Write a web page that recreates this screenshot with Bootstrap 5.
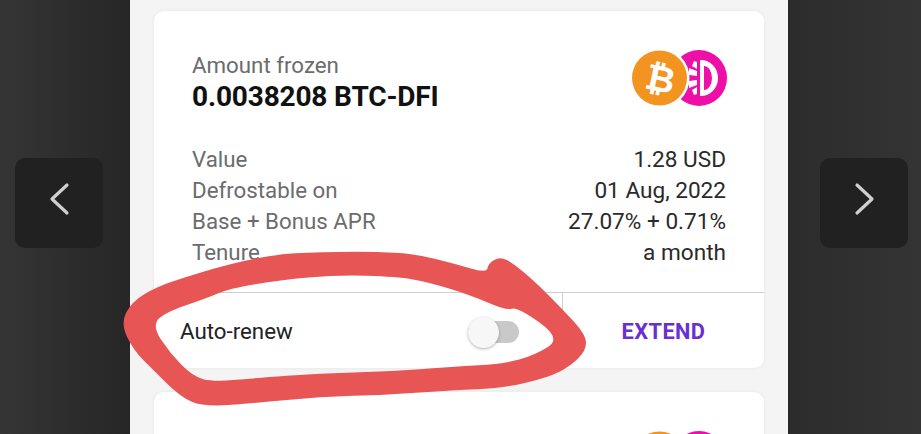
<!DOCTYPE html>
<html lang="en">
<head>
<meta charset="utf-8">
<title>Amount frozen</title>
<link href="https://cdn.jsdelivr.net/npm/bootstrap@5.3.0/dist/css/bootstrap.min.css" rel="stylesheet">
<style>
html,body{height:434px;overflow:hidden;}
body{font-family:Roboto,"Liberation Sans",sans-serif;background:linear-gradient(90deg,#353535 0,#262626 130px,#262626 788px,#2c2c2c 790px,#343434 100%);color:#1d1d1d;}
.stage{width:921px;height:434px;position:relative;}
.gutter{width:130px;padding-left:15px;}
.gutter-r{width:133px;padding-left:32px;}
.arrowbox{width:88px;height:90px;border-radius:10px;background:#212121;margin-top:158px;padding-bottom:8px;}
.sheet{width:658px;height:434px;background:#f4f4f5;padding:11px 24px 0;}
.fz-card{border:0;border-radius:10px;background:#fff;box-shadow:0 0 4px rgba(0,0,0,.06);}
.fz-main{height:357px;}
.fz-next{height:60px;margin-top:24px;border-radius:10px 10px 0 0;overflow:hidden;}
.fz-body{height:281px;padding:39px 38px 0;}
.lbl{font-size:22.3px;line-height:30px;color:#6c6c6c;}
.amt{font-size:28px;line-height:33px;font-weight:700;color:#111;letter-spacing:-.15px;}
.rows{margin-top:31px;}
.rw{font-size:22.3px;line-height:31px;color:#6c6c6c;}
.rw b{font-weight:400;font-size:22.6px;color:#2a2a2a;}
.foot{height:76px;border-top:1px solid #cfcfcf;padding-top:3px;}
.foot-l{width:408px;padding-left:26px;padding-right:43px;}
.foot-r{width:202px;border-left:1px solid #cfcfcf;margin-top:-3px;padding-top:3px;}
.renew{font-size:22.3px;color:#222;}
.ext{font-size:21.8px;font-weight:700;color:#6a2fd0;letter-spacing:.4px;}
.sw{width:51px;height:22px;background:#c9c9c9;border-radius:11px;}
.sw i{display:block;width:31px;height:31px;border-radius:50%;background:#f7f7f7;box-shadow:0 1px 3px rgba(0,0,0,.3);}
.coins{margin-top:-2px;margin-right:-1px;}
.next-coins{padding:37px 37px 0 0;}
.scrib{position:absolute;left:0;top:0;pointer-events:none;}
</style>
</head>
<body>
<div class="stage d-flex">
  <div class="gutter flex-shrink-0">
    <div class="arrowbox d-flex align-items-center justify-content-center">
      <svg width="24" height="34" viewBox="0 0 24 34"><path d="M20 3 L5 17 L20 31" fill="none" stroke="#cfcfcf" stroke-width="3.2" stroke-linecap="round" stroke-linejoin="round"/></svg>
    </div>
  </div>
  <div class="sheet flex-shrink-0">
    <div class="card fz-card fz-main">
      <div class="fz-body">
        <div class="d-flex justify-content-between align-items-start">
          <div>
            <div class="lbl">Amount frozen</div>
            <div class="amt">0.0038208 BTC-DFI</div>
          </div>
          <svg class="coins" width="96" height="60" viewBox="0 0 96 60">
            <circle cx="68" cy="30" r="28" fill="#ee0fa8"/>
            <path d="M69 12 h1 a17 18 0 0 1 0 36 h-1 z M73 18 v24 a8 12 0 0 0 0 -24 z" fill="#fff" fill-rule="evenodd"/>
            <path d="M66 14 v7 l-5 -3 l2 -5z M66 23 v5 l-8 -1 v-7z M66 32 v5 l-8 3 v-7z M66 39 v7 l-3 1 l-2 -5z" fill="#fff"/>
            <circle cx="28.5" cy="30" r="30" fill="#fff"/>
            <circle cx="28.5" cy="30" r="27.5" fill="#f39320"/>
            <text x="29.5" y="43" font-family="'DejaVu Sans',sans-serif" font-size="36" font-weight="700" fill="#fff" text-anchor="middle" transform="rotate(12 28 30)">₿</text>
          </svg>
        </div>
        <div class="rows">
          <div class="rw d-flex justify-content-between align-items-center"><span>Value</span><b>1.28 USD</b></div>
          <div class="rw d-flex justify-content-between align-items-center"><span>Defrostable on</span><b>01 Aug, 2022</b></div>
          <div class="rw d-flex justify-content-between align-items-center"><span>Base + Bonus APR</span><b>27.07% + 0.71%</b></div>
          <div class="rw d-flex justify-content-between align-items-center"><span>Tenure</span><b>a month</b></div>
        </div>
      </div>
      <div class="foot d-flex">
        <div class="foot-l d-flex align-items-center justify-content-between">
          <span class="renew">Auto-renew</span>
          <span class="sw d-flex align-items-center"><i></i></span>
        </div>
        <div class="foot-r d-flex align-items-center justify-content-center"><span class="ext">EXTEND</span></div>
      </div>
    </div>
    <div class="card fz-card fz-next">
      <div class="next-coins d-flex justify-content-end">
        <svg width="96" height="60" viewBox="0 0 96 60">
          <circle cx="68" cy="30" r="28" fill="#ee0fa8"/>
          <circle cx="28.5" cy="30" r="30" fill="#fff"/>
          <circle cx="28.5" cy="30" r="27.5" fill="#f39320"/>
        </svg>
      </div>
    </div>
  </div>
  <div class="gutter-r flex-shrink-0">
    <div class="arrowbox d-flex align-items-center justify-content-center">
      <svg width="24" height="34" viewBox="0 0 24 34"><path d="M5 3 L20 17 L5 31" fill="none" stroke="#cfcfcf" stroke-width="3.2" stroke-linecap="round" stroke-linejoin="round"/></svg>
    </div>
  </div>
  <svg class="scrib" width="921" height="434" viewBox="0 0 921 434">
    <path id="ink" fill="#e85555" fill-rule="evenodd"/>
  </svg>
</div>
<script>
(function(){
  var outer=[[1100,100],[1105,70],[1140,50],[1180,70],[1250,130],[1330,210],[1398,285],[1398,332],[1352,378],[1285,412],[1150,445],[1000,450],[800,465],[600,470],[400,490],[250,500],[180,470],[100,390],[40,330],[2,250],[35,185],[110,140],[200,110],[300,80],[450,45],[600,35],[800,35],[900,45],[1000,70]];
  var inner=[[95,255],[140,215],[260,175],[330,145],[480,120],[650,105],[830,110],[920,125],[1050,165],[1160,212],[1192,200],[1325,295],[1245,345],[1150,372],[1000,380],[800,395],[600,400],[400,415],[280,425],[220,410],[150,340]];
  function smooth(p){
    var q=p.map(function(a){return [120+a[0]/3,240+a[1]/3];}),n=q.length,d='';
    function m(a,b){return ((a[0]+b[0])/2).toFixed(1)+' '+((a[1]+b[1])/2).toFixed(1);}
    d='M'+m(q[n-1],q[0]);
    for(var i=0;i<n;i++){d+=' Q'+q[i][0].toFixed(1)+' '+q[i][1].toFixed(1)+' '+m(q[i],q[(i+1)%n]);}
    return d+'Z';
  }
  document.getElementById('ink').setAttribute('d',smooth(outer)+' '+smooth(inner));
})();
</script>
<script src="https://cdn.jsdelivr.net/npm/bootstrap@5.3.0/dist/js/bootstrap.bundle.min.js"></script>
</body>
</html>
